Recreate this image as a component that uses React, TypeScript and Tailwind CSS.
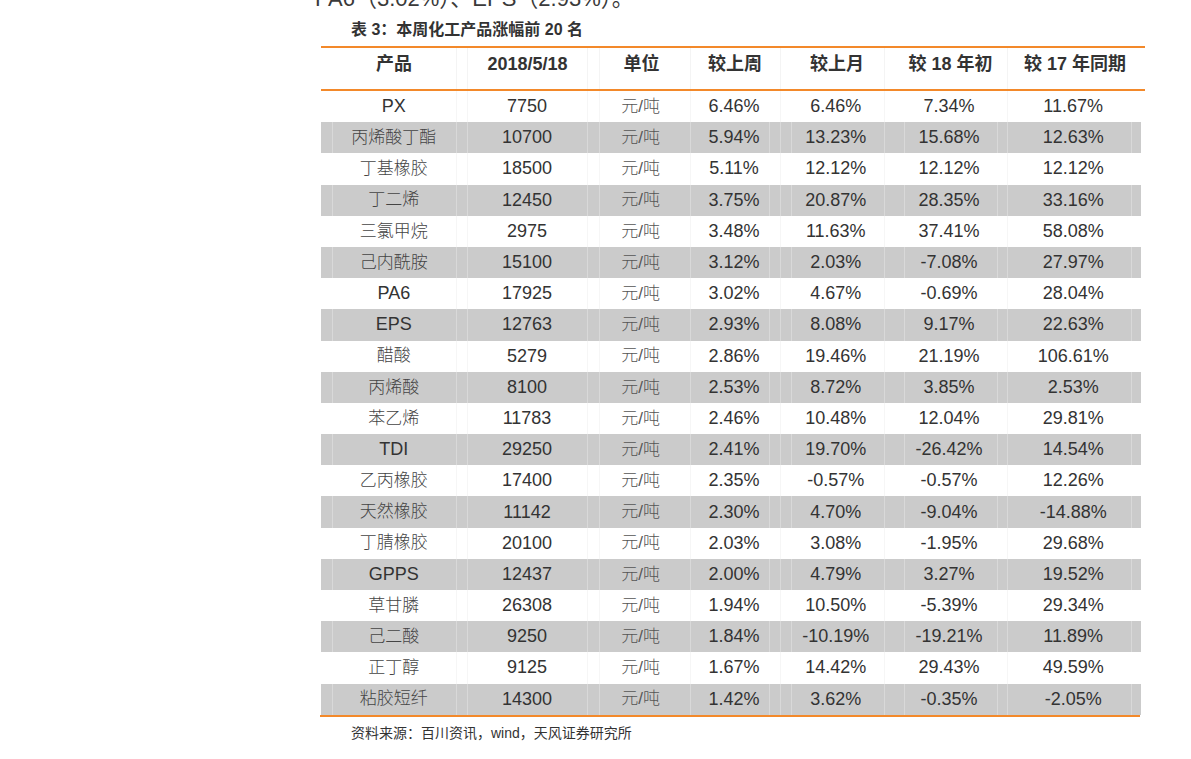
import React from "react";

const cols = [141, 131, 97, 90, 114, 113, 136];
const header = ["产品", "2018/5/18", "单位", "较上周", "较上月", "较 18 年初", "较 17 年同期"];
const rows: string[][] = [
  ["PX", "7750", "6.46%", "6.46%", "7.34%", "11.67%"],
  ["丙烯酸丁酯", "10700", "5.94%", "13.23%", "15.68%", "12.63%"],
  ["丁基橡胶", "18500", "5.11%", "12.12%", "12.12%", "12.12%"],
  ["丁二烯", "12450", "3.75%", "20.87%", "28.35%", "33.16%"],
  ["三氯甲烷", "2975", "3.48%", "11.63%", "37.41%", "58.08%"],
  ["己内酰胺", "15100", "3.12%", "2.03%", "-7.08%", "27.97%"],
  ["PA6", "17925", "3.02%", "4.67%", "-0.69%", "28.04%"],
  ["EPS", "12763", "2.93%", "8.08%", "9.17%", "22.63%"],
  ["醋酸", "5279", "2.86%", "19.46%", "21.19%", "106.61%"],
  ["丙烯酸", "8100", "2.53%", "8.72%", "3.85%", "2.53%"],
  ["苯乙烯", "11783", "2.46%", "10.48%", "12.04%", "29.81%"],
  ["TDI", "29250", "2.41%", "19.70%", "-26.42%", "14.54%"],
  ["乙丙橡胶", "17400", "2.35%", "-0.57%", "-0.57%", "12.26%"],
  ["天然橡胶", "11142", "2.30%", "4.70%", "-9.04%", "-14.88%"],
  ["丁腈橡胶", "20100", "2.03%", "3.08%", "-1.95%", "29.68%"],
  ["GPPS", "12437", "2.00%", "4.79%", "3.27%", "19.52%"],
  ["草甘膦", "26308", "1.94%", "10.50%", "-5.39%", "29.34%"],
  ["己二酸", "9250", "1.84%", "-10.19%", "-19.21%", "11.89%"],
  ["正丁醇", "9125", "1.67%", "14.42%", "29.43%", "49.59%"],
  ["粘胶短纤", "14300", "1.42%", "3.62%", "-0.35%", "-2.05%"],
];

// decorative faint cell-grid lines (offsets from table left edge)
const grayLines = [11, 135, 146, 266, 278, 369, 448, 459, 470, 563, 583, 676, 686, 810];
const whiteLines = [135, 146, 266, 278, 369, 459, 563, 686];

const cjk = "font-['Liberation_Sans','Noto_Sans_CJK_SC',sans-serif]";

function isLatin(s: string) {
  return /^[A-Za-z0-9.%\-/ ]+$/.test(s);
}

export default function App() {
  return (
    <div className={`w-[1191px] h-[759px] bg-white overflow-hidden text-[#333] ${cjk}`}>
      <div className="pl-[315px] mt-[-13px] h-[24px] text-[22px] leading-[24px] text-[#3a3a3a] whitespace-nowrap">
        PA6（3.02%）、EPS（2.93%）。
      </div>
      <div className="pl-[351px] mt-[11px] h-[16px] text-[16px] leading-[16px] font-bold text-[#333] whitespace-nowrap">
        表 3：本周化工产品涨幅前 20 名
      </div>
      <div className="ml-[321px] mt-[8px] w-[822px]">
        <div className="h-[2px] bg-[#f3892a] w-[824px]" />
        <div className="flex h-[41px] relative">
          {header.map((h, i) => (
            <div
              key={i}
              style={{ width: cols[i] }}
              className={`flex items-start pt-[3px] justify-center text-[18px] font-bold text-[#333] whitespace-nowrap ${
                i === 0 ? "pl-[5px]" : ""
              }`}
            >
              {h}
            </div>
          ))}
          {whiteLines.map((x) => (
            <div key={x} style={{ left: x }} className="absolute top-0 bottom-0 w-px bg-[#f4f4f4]" />
          ))}
        </div>
        <div className="h-[2px] bg-[#f3892a] w-[824px]" />
        {rows.map((r, ri) => {
          const gray = ri % 2 === 1;
          const cells = [r[0], r[1], "元/吨", r[2], r[3], r[4], r[5]];
          return (
            <div
              key={ri}
              className={`flex h-[31.2px] relative w-[820px] ${gray ? "bg-[#cbcbcb]" : "bg-white"}`}
            >
              {cells.map((c, ci) => {
                const latin = isLatin(c);
                return (
                  <div
                    key={ci}
                    style={{ width: cols[ci] }}
                    className={`relative z-10 flex items-center justify-center whitespace-nowrap ${
                      ci === 0 ? "pl-[5px]" : ""
                    } ${
                      latin
                        ? "text-[18px] text-[#333]"
                        : ci === 2
                        ? "text-[17px] font-light text-[#555]"
                        : "text-[17px] font-light text-[#444]"
                    }`}
                  >
                    {c}
                  </div>
                );
              })}
              {(gray ? grayLines : whiteLines).map((x) => (
                <div
                  key={x}
                  style={{ left: x }}
                  className={`absolute top-0 bottom-0 w-px ${gray ? "bg-[#d9d9d9]" : "bg-[#f6f6f6]"}`}
                />
              ))}
            </div>
          );
        })}
        <div className="h-[2px] bg-[#f3892a] w-[820px] -ml-px" />
      </div>
      <div className="pl-[351px] mt-[8px] text-[14px] leading-[16px] text-[#333] whitespace-nowrap">
        资料来源：百川资讯，wind，天风证券研究所
      </div>
    </div>
  );
}
